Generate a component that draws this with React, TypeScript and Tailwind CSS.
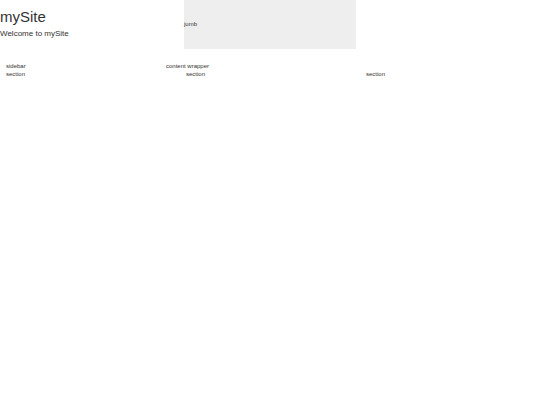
import React from 'react';

const sections = ['section', 'section', 'section'];

const Header = () => (
  <header className="grid grid-cols-[184fr_172fr_184fr]">
    <div className="pt-2">
      <h1 className="text-[15px] leading-[18px]">mySite</h1>
      <p className="mt-1 text-[8px] leading-[8px]">Welcome to mySite</p>
    </div>
    <div className="bg-[#eeeeee] py-5 text-[6px] leading-[9px]">jumb</div>
  </header>
);

const App = () => {
  return (
    <div className="font-['Liberation_Sans',Arial,sans-serif] text-[#333333]">
      <Header />
      <main className="mt-[13px] text-[6px] leading-[8px]">
        <div className="grid grid-cols-[160fr_380fr]">
          <aside className="px-1.5">sidebar</aside>
          <div className="px-1.5">content wrapper</div>
        </div>
        <div className="grid grid-cols-3">
          {sections.map((name, i) => (
            <section key={i} className="px-1.5">
              {name}
            </section>
          ))}
        </div>
      </main>
    </div>
  );
};

export default App;
